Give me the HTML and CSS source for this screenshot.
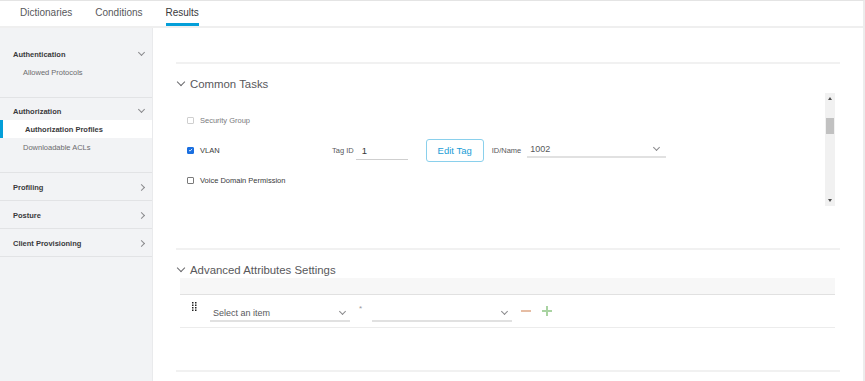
FILE: index.html
```html
<!DOCTYPE html>
<html lang="en">

<head>
    <meta charset="UTF-8" />
    <title>Policy Elements - Results</title>
    <link rel="stylesheet" href="styles.css">
</head>

<body>
    <div class="app">

        <header class="tabs">
            <a class="tab">Dictionaries</a>
            <a class="tab">Conditions</a>
            <a class="tab active">Results</a>
        </header>

        <div class="layout">

            <aside class="sidebar">
                <div class="nav-section open">
                    <div class="nav-head">Authentication <span class="chev down"></span></div>
                    <div class="nav-item">Allowed Protocols</div>
                </div>
                <div class="nav-section open">
                    <div class="nav-head">Authorization <span class="chev down"></span></div>
                    <div class="nav-item selected">Authorization Profiles</div>
                    <div class="nav-item">Downloadable ACLs</div>
                </div>
                <div class="nav-section">
                    <div class="nav-head">Profiling <span class="chev right"></span></div>
                </div>
                <div class="nav-section">
                    <div class="nav-head">Posture <span class="chev right"></span></div>
                </div>
                <div class="nav-section">
                    <div class="nav-head">Client Provisioning <span class="chev right"></span></div>
                </div>
            </aside>

            <main class="content">

                <!-- Common Tasks -->
                <section class="panel">
                    <h2 class="panel-title"><span class="chev down big"></span>Common Tasks</h2>
                    <div class="task-box">
                        <div class="task-list">
                            <div class="task">
                                <span class="check disabled"></span>
                                <span class="task-label muted">Security Group</span>
                            </div>
                            <div class="task">
                                <span class="check checked">
                                    <svg viewBox="0 0 8 8" width="8" height="8">
                                        <path d="M1.6 4.2 L3.3 5.8 L6.5 2.2" fill="none" stroke="#fff" stroke-width="1.3" />
                                    </svg>
                                </span>
                                <span class="task-label">VLAN</span>
                                <span class="field-label">Tag ID</span>
                                <span class="text-input">1</span>
                                <button class="btn-outline">Edit Tag</button>
                                <span class="field-label">ID/Name</span>
                                <span class="select wide">1002 <span class="chev down"></span></span>
                            </div>
                            <div class="task">
                                <span class="check"></span>
                                <span class="task-label">Voice Domain Permission</span>
                            </div>
                        </div>
                        <div class="scrollbar">
                            <span class="arrow up"></span>
                            <span class="thumb"></span>
                            <span class="arrow dn"></span>
                        </div>
                    </div>
                </section>

                <!-- Advanced Attributes -->
                <section class="panel">
                    <h2 class="panel-title"><span class="chev down big"></span>Advanced Attributes Settings</h2>
                    <div class="attr-table">
                        <div class="attr-head"></div>
                        <div class="attr-row">
                            <svg class="grip" viewBox="0 0 5 9" width="5" height="9">
                                <rect x="0" y="0" width="1.5" height="1.5" />
                                <rect x="3" y="0" width="1.5" height="1.5" />
                                <rect x="0" y="2.5" width="1.5" height="1.5" />
                                <rect x="3" y="2.5" width="1.5" height="1.5" />
                                <rect x="0" y="5" width="1.5" height="1.5" />
                                <rect x="3" y="5" width="1.5" height="1.5" />
                                <rect x="0" y="7.5" width="1.5" height="1.5" />
                                <rect x="3" y="7.5" width="1.5" height="1.5" />
                            </svg>
                            <span class="select attr">Select an item <span class="chev down"></span></span>
                            <span class="req">*</span>
                            <span class="select attr"><span class="chev down"></span></span>
                            <span class="op minus"></span>
                            <span class="op plus"></span>
                        </div>
                    </div>
                </section>

                <div class="panel end"></div>
            </main>
        </div>
    </div>
</body>

</html>
```

FILE: styles.css
```css
* {
    box-sizing: border-box;
    margin: 0;
    padding: 0;
    font-family: 'Liberation Sans', Arial, sans-serif;
}

body {
    background: #fff;
    color: #39393b;
}

.app {
    width: 865px;
    height: 381px;
    border-top: 1px solid #e4e4e4;
    border-right: 2px solid #ececec;
    display: flex;
    flex-direction: column;
    overflow: hidden;
}

/* top tabs */
.tabs {
    height: 27px;
    display: flex;
    padding-left: 20px;
    gap: 23px;
    border-bottom: 2px solid #efefef;
}

.tab {
    font-size: 10px;
    color: #58585b;
    padding-top: 6px;
    height: 25px;
}

.tab.active {
    color: #39393b;
    border-bottom: 3px solid #049fd9;
}

.layout {
    flex: 1;
    display: flex;
}

/* sidebar */
.sidebar {
    width: 153px;
    background: #f2f3f5;
    padding-top: 13px;
    border-right: 1px solid #e9eaec;
}

.nav-section {
    padding: 5px 0 4px;
    border-bottom: 1px solid #e2e3e5;
}

.nav-section.open {
    padding: 4px 0 16px;
}

.nav-head {
    height: 18px;
    display: flex;
    align-items: center;
    justify-content: space-between;
    padding: 0 8px 0 13px;
    font-size: 7.5px;
    font-weight: bold;
    color: #39393b;
}

.nav-item {
    height: 18px;
    display: flex;
    align-items: center;
    padding-left: 23px;
    font-size: 7.5px;
    color: #6b6b6e;
}

.nav-item.selected {
    background: #fff;
    font-weight: bold;
    color: #39393b;
    border-left: 3px solid #049fd9;
    padding-left: 22px;
}

/* chevrons */
.chev {
    display: inline-block;
    width: 5px;
    height: 5px;
    border-right: 1px solid #8a8a8d;
    border-bottom: 1px solid #8a8a8d;
}

.chev.down {
    transform: rotate(45deg);
    margin-top: -3px;
}

.chev.right {
    transform: rotate(-45deg);
}

.chev.big {
    width: 6px;
    height: 6px;
    border-color: #6b6b6e;
    margin: -4px 6px 0 2px;
}

/* content */
.content {
    flex: 1;
    padding: 34px 23px 0 23px;
}

.panel {
    border-top: 2px solid #f1f1f1;
    padding: 12px 0 42px;
}

.panel-title {
    height: 16px;
    display: flex;
    align-items: center;
    font-size: 11.4px;
    font-weight: normal;
    color: #58585b;
}

.task-box {
    margin: 1px 5px 0 0;
    height: 113px;
    display: flex;
}

.task-list {
    flex: 1;
    padding: 12px 11px;
}

.task {
    height: 30px;
    display: flex;
    align-items: center;
}

.check {
    width: 7px;
    height: 7px;
    border: 1px solid #7a7a7a;
    border-radius: 1px;
    display: flex;
    align-items: center;
    justify-content: center;
    margin-right: 6px;
}

.check.disabled {
    border-color: #cfcfcf;
}

.check.checked {
    background: #1a6fe0;
    border-color: #1a6fe0;
}

.task-label {
    font-size: 7.5px;
    color: #39393b;
    width: 132px;
}

.task-label.muted {
    color: #7a7a7d;
}

.field-label {
    font-size: 7.5px;
    color: #58585b;
}

.text-input {
    width: 52px;
    height: 19px;
    margin-left: 2px;
    padding: 4px 0 0 6px;
    font-size: 9.5px;
    border-bottom: 1px solid #cfcfcf;
    color: #39393b;
}

.btn-outline {
    width: 58px;
    height: 23px;
    margin: 0 8px 0 18px;
    border: 1px solid #8ad0ec;
    border-radius: 3px;
    background: #fff;
    color: #1a9dd6;
    font-size: 9.5px;
}

.select {
    display: flex;
    align-items: center;
    height: 16px;
    font-size: 9px;
    color: #58585b;
    border-bottom: 2px solid #e1e1e1;
}

.select .chev {
    width: 5px;
    height: 5px;
    margin-left: auto;
}

.select.wide {
    width: 139px;
    margin-left: 6px;
    padding: 0 7px 0 3px;
}

/* fake scrollbar */
.scrollbar {
    width: 10px;
    background: #f1f1f1;
    display: flex;
    flex-direction: column;
    align-items: center;
}

.arrow {
    width: 0;
    height: 0;
    border-left: 2px solid transparent;
    border-right: 2px solid transparent;
    margin: 4px 0;
}

.arrow.up {
    border-bottom: 3px solid #505050;
}

.arrow.dn {
    border-top: 3px solid #505050;
    margin-top: auto;
}

.thumb {
    width: 8px;
    height: 16px;
    background: #c1c1c1;
    margin-top: 14px;
}

/* advanced attributes */
.attr-table {
    margin: 0 5px 0 4px;
}

.attr-head {
    height: 17px;
    background: #f7f7f7;
    border-bottom: 1px solid #e1e1e1;
}

.attr-row {
    height: 33px;
    display: flex;
    align-items: center;
    padding-left: 12px;
    border-bottom: 1px solid #ececec;
}

.grip {
    fill: #222;
    align-self: flex-start;
    margin-top: 7px;
    margin-right: 13px;
}

.select.attr {
    width: 140px;
    padding: 0 5px 0 3px;
    margin-top: 6px;
}

.req {
    font-size: 8px;
    color: #9a9a9a;
    width: 22px;
    padding-left: 9px;
    align-self: flex-start;
    margin-top: 9px;
}

.op {
    position: relative;
    width: 10px;
    height: 10px;
    margin-left: 9px;
}

.op::before,
.op::after {
    content: '';
    position: absolute;
    background: currentColor;
}

.op::before {
    left: 0;
    top: 4px;
    width: 10px;
    height: 2px;
}

.minus {
    color: #e6bda4;
}

.minus::after {
    display: none;
}

.plus {
    color: #a9d3a2;
    margin-left: 11px;
}

.plus::after {
    left: 4px;
    top: 0;
    width: 2px;
    height: 10px;
}

.panel.end {
    padding: 0;
}
```
